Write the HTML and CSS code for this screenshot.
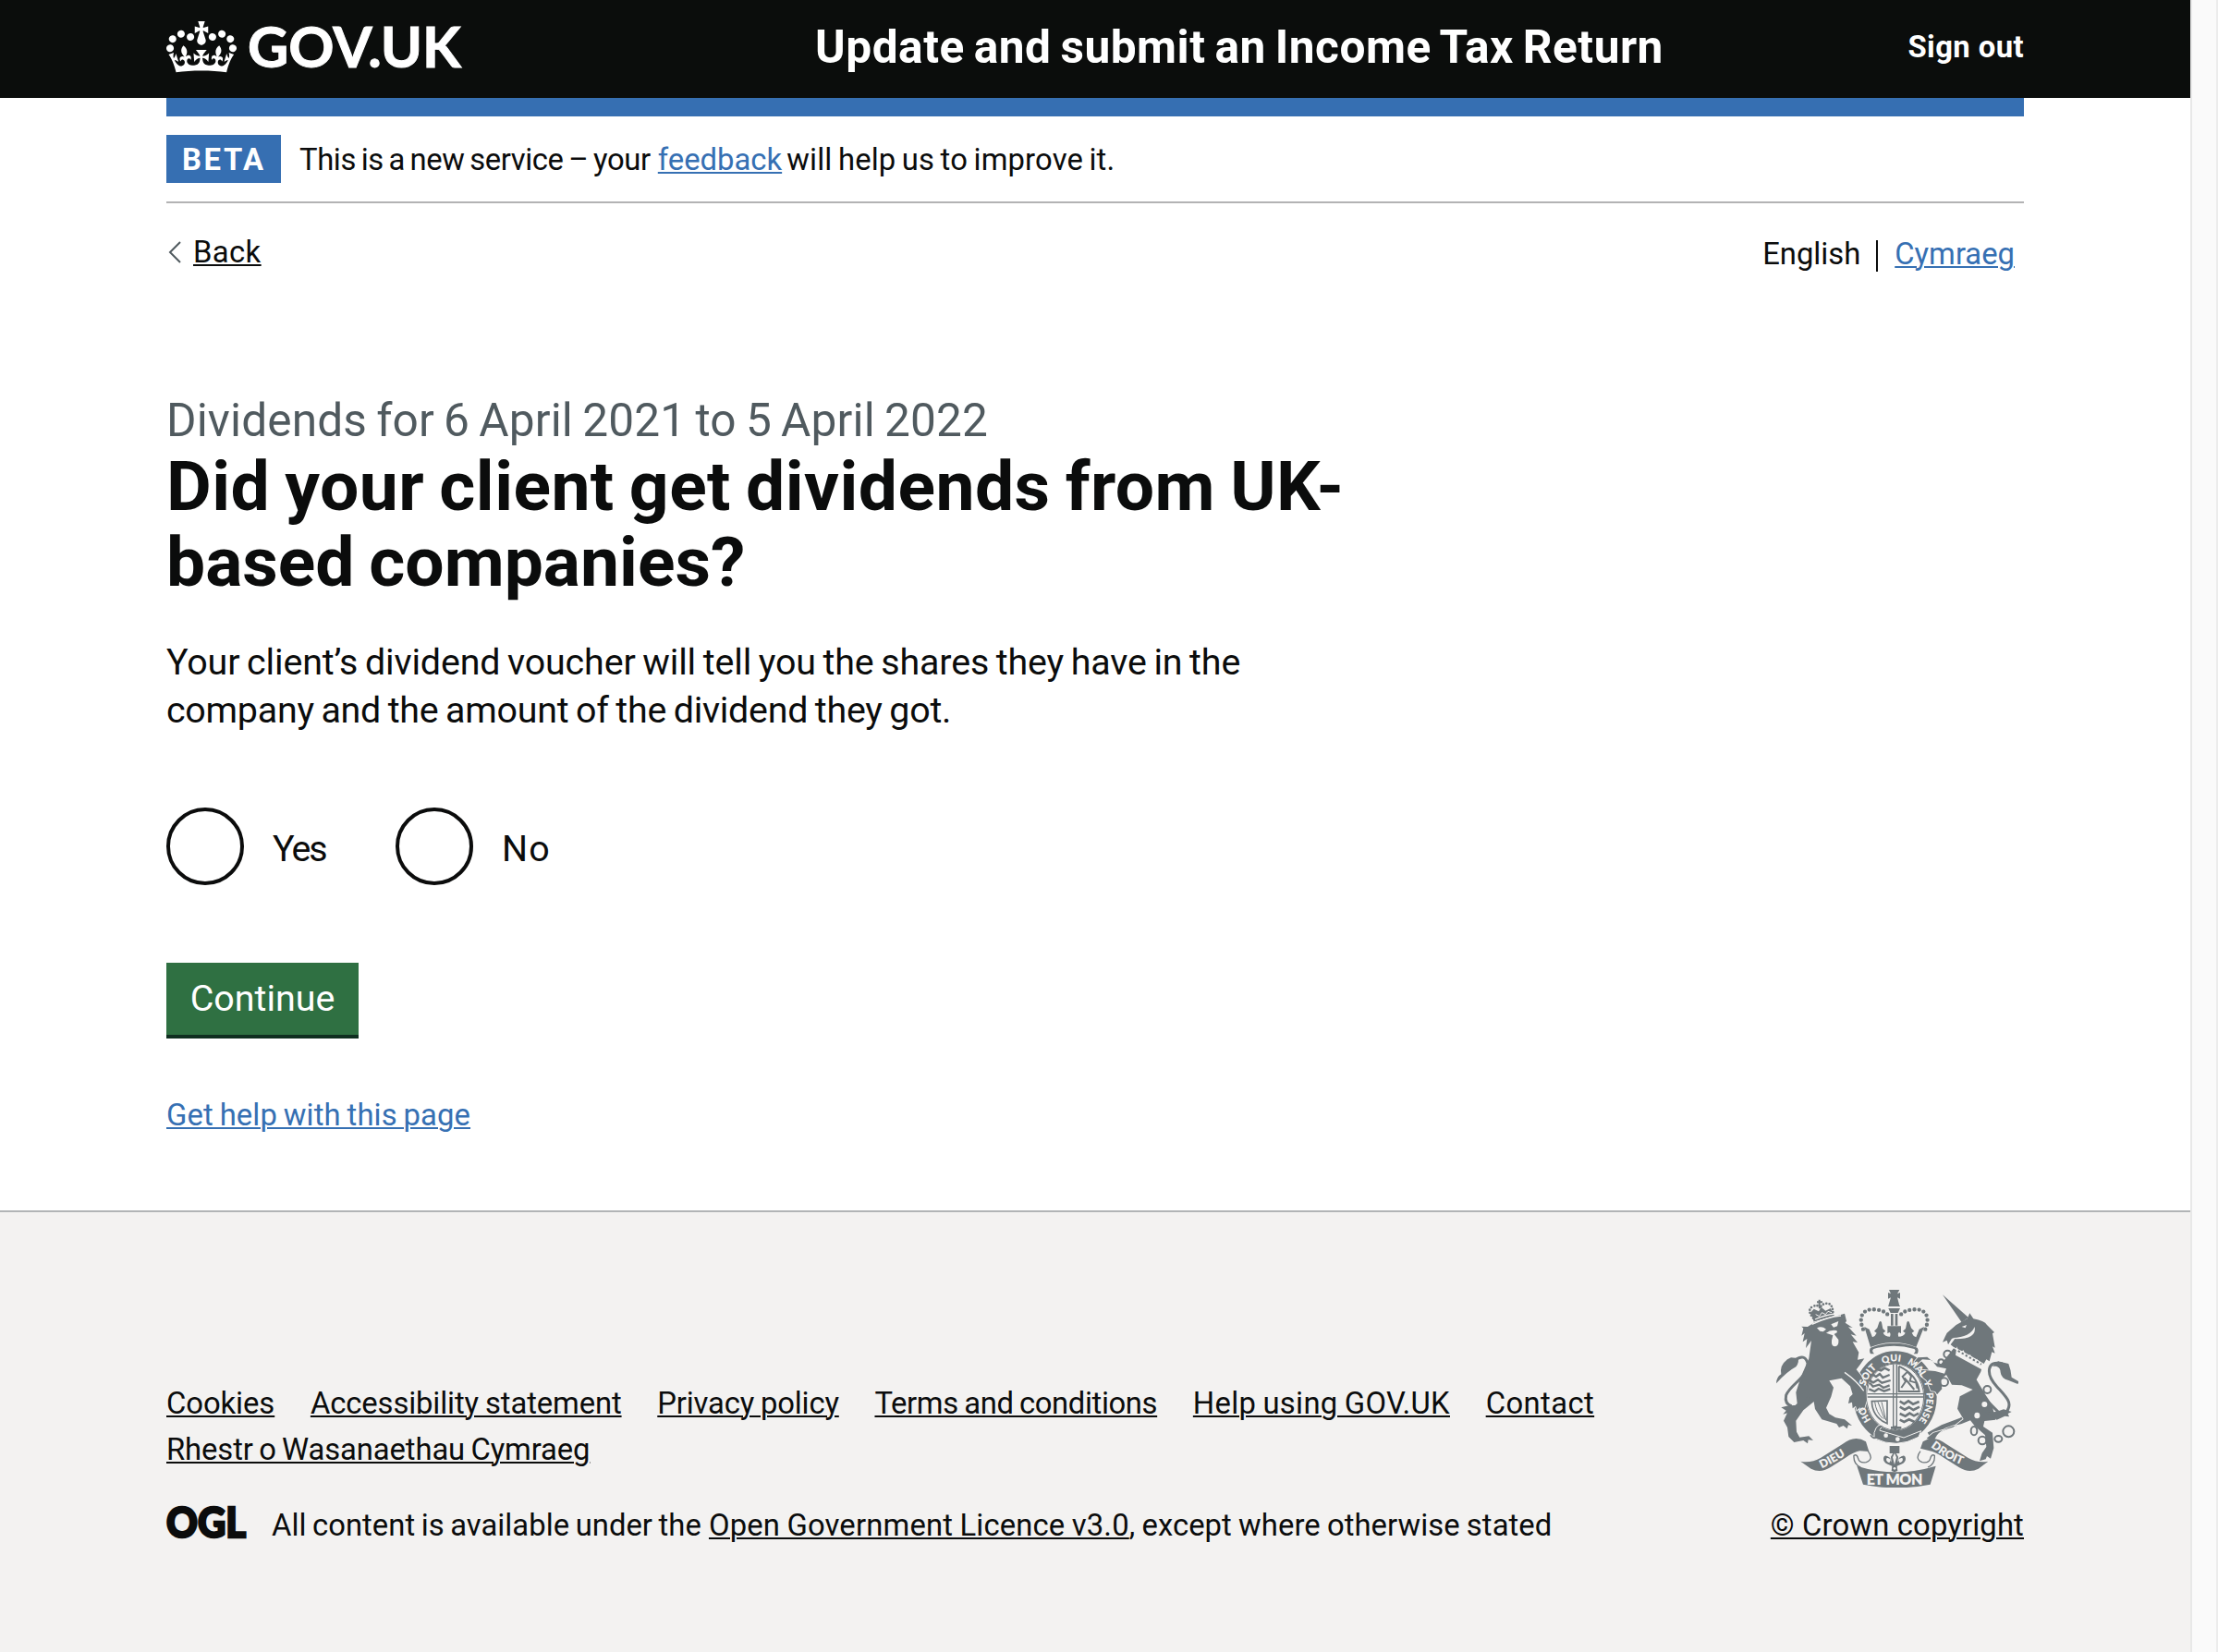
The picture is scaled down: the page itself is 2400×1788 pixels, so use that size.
FILE: index.html
```
<!DOCTYPE html>
<html lang="en">
<head>
<meta charset="utf-8">
<title>Did your client get dividends from UK-based companies?</title>
<link rel="stylesheet" href="styles.css">
</head>
<body>
<div class="page">
  <header class="header">
    <div class="container header-row">
      <a class="logo" href="#">
        <svg class="crown" viewBox="0 0 132 97" aria-hidden="true"><path fill="currentColor" fill-rule="evenodd" d="M25 30.2c3.5 1.5 7.7-.2 9.1-3.7 1.5-3.6-.2-7.8-3.9-9.2-3.6-1.4-7.6.3-9.1 3.9-1.4 3.5.3 7.5 3.9 9zM9 39.5c3.6 1.5 7.8-.2 9.2-3.7 1.5-3.6-.2-7.8-3.9-9.1-3.6-1.5-7.6.2-9.1 3.8-1.4 3.5.3 7.5 3.8 9zM4.4 57.2c3.5 1.5 7.7-.2 9.1-3.8 1.5-3.6-.2-7.7-3.9-9.1-3.5-1.5-7.6.3-9.1 3.8-1.4 3.5.3 7.6 3.9 9.1zm38.3-21.4c3.5 1.5 7.7-.2 9.1-3.8 1.5-3.6-.2-7.7-3.9-9.1-3.6-1.5-7.6.3-9.1 3.8-1.3 3.6.4 7.7 3.9 9.1zm64.4-5.6c-3.6 1.5-7.8-.2-9.1-3.7-1.5-3.6.2-7.8 3.8-9.2 3.6-1.4 7.7.3 9.2 3.9 1.3 3.5-.4 7.5-3.9 9zm15.9 9.3c-3.6 1.5-7.7-.2-9.1-3.7-1.5-3.6.2-7.8 3.7-9.1 3.6-1.5 7.7.2 9.2 3.8 1.5 3.5-.3 7.5-3.8 9zm4.7 17.7c-3.6 1.5-7.8-.2-9.2-3.8-1.5-3.6.2-7.7 3.9-9.1 3.6-1.5 7.7.3 9.2 3.8 1.3 3.5-.4 7.6-3.9 9.1zM89.3 35.8c-3.6 1.5-7.8-.2-9.2-3.8-1.4-3.6.2-7.7 3.9-9.1 3.6-1.5 7.7.3 9.2 3.8 1.4 3.6-.3 7.7-3.9 9.1zM69.7 17.7l8.9 4.7V9.3l-8.9 2.8c-.2-.3-.5-.6-.9-.9L72.4 0H59.6l3.5 11.2c-.3.3-.6.5-.9.9l-8.8-2.8v13.1l8.8-4.7c.3.3.6.7.9.9l-5 15.4v.1c-.2.8-.4 1.6-.4 2.4 0 4.1 3.1 7.5 7 8.1h.2c.3 0 .7.1 1 .1.4 0 .7 0 1-.1h.2c4-.6 7.1-4.1 7.1-8.1 0-.8-.1-1.7-.4-2.4V34l-5.1-15.4c.4-.2.7-.6 1-.9zM66 92.8c16.9 0 32.8 1.1 47.1 3.2 4-16.9 8.9-26.7 14-33.5l-9.6-3.4c1 4.9 1.1 7.2 0 10.2-1.5-1.4-3-4.3-4.2-8.7L108.6 76c2.8-2 5-3.2 7.5-3.3-4.4 9.4-10 11.9-13.6 11.2-4.3-.8-6.3-4.6-5.6-7.9 1-4.7 5.7-5.9 8-.5 4.3-8.7-3-11.4-7.6-8.8 7.1-7.2 7.9-13.5 2.1-21.1-8 6.1-8.1 12.3-4.5 20.8-4.7-5.4-12.1-2.5-9.5 6.2 3.4-5.2 7.9-2 7.2 3.1-.6 4.3-6.4 7.8-13.5 7.2-10.3-.9-10.9-8-11.2-13.8 2.5-.5 7.1 1.8 11 7.3L80.2 60c-4.1 4.4-8 5.3-12.3 5.4 1.4-4.4 8-11.6 8-11.6H55.5s6.4 7.2 7.9 11.6c-4.2-.1-8-1-12.3-5.4l1.4 16.4c3.9-5.5 8.5-7.7 10.9-7.3-.3 5.8-.9 12.8-11.1 13.8-7.2.6-12.9-2.9-13.5-7.2-.7-5 3.8-8.3 7.1-3.1 2.7-8.7-4.6-11.6-9.4-6.2 3.7-8.5 3.6-14.7-4.6-20.8-5.8 7.6-5 13.9 2.2 21.1-4.7-2.6-11.9.1-7.7 8.8 2.3-5.5 7.1-4.2 8.1.5.7 3.3-1.3 7.1-5.7 7.9-3.5.7-9-1.8-13.5-11.2 2.5.1 4.7 1.3 7.5 3.3l-4.7-15.4c-1.2 4.4-2.7 7.2-4.3 8.7-1.1-3-.9-5.3 0-10.2l-9.5 3.4c5 6.9 9.9 16.7 14 33.5 14.8-2.1 30.8-3.2 47.7-3.2z"/></svg>
        <span class="logo-text">GOV.UK</span>
      </a>
      <a class="service-name" href="#">Update and submit an Income Tax Return</a>
      <a class="sign-out" href="#">Sign out</a>
    </div>
  </header>

  <div class="container">
    <div class="blue-bar"></div>
    <div class="phase-banner">
      <strong class="tag">BETA</strong>
      <p class="phase-text"><span class="phase-lead">This is a new service – your</span> <a class="link feedback" href="#">feedback</a> <span class="phase-tail">will help us to improve it.</span></p>
    </div>
    <div class="nav-row">
      <a class="back" href="#"><svg class="chevron" viewBox="0 0 20 24" aria-hidden="true"><path d="M15 1 4 12l11 11" fill="none" stroke="#505a5f" stroke-width="2"/></svg><span class="back-text">Back</span></a>
      <div class="languages"><span class="language">English</span><a class="link language welsh" href="#">Cymraeg</a></div>
    </div>

    <main class="main">
      <span class="caption">Dividends for 6 April 2021 to 5 April 2022</span>
      <h1 class="heading">Did your client get dividends from UK-<br><span class="heading-last">based companies?</span></h1>
      <p class="body"><span class="body-first">Your client’s dividend voucher will tell you the shares they have in the</span><br>company and the amount of the dividend they got.</p>
      <form class="form">
        <div class="radios">
          <label class="radio"><input type="radio" name="answer" class="radio-input"><span class="yes">Yes</span></label>
          <label class="radio"><input type="radio" name="answer" class="radio-input"><span class="no">No</span></label>
        </div>
        <button type="button" class="button">Continue</button>
      </form>
      <a class="link help" href="#">Get help with this page</a>
    </main>
  </div>

  <footer class="footer">
    <div class="container footer-row">
      <div class="footer-main">
        <ul class="footer-links">
          <li><a class="l1" href="#">Cookies</a></li>
          <li><a class="l2" href="#">Accessibility statement</a></li>
          <li><a class="l3" href="#">Privacy policy</a></li>
          <li><a class="l4" href="#">Terms and conditions</a></li>
          <li><a class="l5" href="#">Help using GOV.UK</a></li>
          <li><a class="l6" href="#">Contact</a></li>
          <li><a class="l7" href="#">Rhestr o Wasanaethau Cymraeg</a></li>
        </ul>
        <div class="licence">
          <svg class="ogl" viewBox="0 0 86 36" aria-label="Open Government Licence"><text x="0" y="34" textLength="86" lengthAdjust="spacingAndGlyphs">OGL</text></svg>
          <span class="licence-text"><span class="c1">All content is available under the</span> <a class="c2" href="#">Open Government Licence v3.0</a><span class="c3">, except where otherwise stated</span></span>
        </div>
      </div>
      <div class="footer-side">
        <svg class="crest" viewBox="66 48 786 642" aria-hidden="true">
          <defs>
            <path id="garter" d="M393.5 491A102 116 0 1 1 517.6 485"/>
            <path id="ribbon-left" d="M214 628Q262 606 326 562"/>
            <path id="ribbon-right" d="M567 558Q630 608 700 626"/>
          </defs>
          <!-- imperial crown -->
          <g fill="#6f777b">
            <path d="M432 48h34l-7 13 9-4v20l-9-4 7 27h2v2h-38v-2l8-27-9 4V57l9 4z"/>
            <path d="M430 108h38l-7 15h-24zM438 126h8v38h-8zM452 126h8v38h-8z"/>
            <path d="M352 168l16 8 10 26q10-4 14-14l-8-6 10-10 6-18q4-8 8 0l4 20 9 8-8 6q6 12 22 12 4-12-2-14l-6 4v-24h44v24l-6-4q-6 2-2 14 16 0 22-12l-8-6 9-8 4-20q4-8 8 0l6 18 10 10-8 6q4 10 14 14l10-26 16-8-26 66q-72-30-148 0z"/>
            <path d="M372 236q76-30 152 0 6 8 0 20h-12q10-10 2-16-66-20-132 0-8 6 2 16h-12q-6-12 0-20z"/>
          </g>
          <path d="M348 176C330 132 350 108 388 112q36 4 44 24M550 176c18-44-2-68-40-64q-36 4-44 24" fill="none" stroke="#6f777b" stroke-width="13" stroke-linecap="round" stroke-dasharray="0 15.5"/>
          <!-- garter and quartered shield -->
          <ellipse cx="452" cy="396" rx="115" ry="129" fill="none" stroke="#6f777b" stroke-width="40"/>
          <ellipse cx="452" cy="396" rx="93" ry="108" fill="#f3f2f1" stroke="#6f777b" stroke-width="3"/>
          <g fill="none" stroke="#6f777b">
            <path d="M357 386h190M357 396h190M446 290v206M457 290v206" stroke-width="4"/>
            <path d="M377 322l13 8 12-9 10 12 22-9M365 340l16 9 15-9 13 10 28-8M370 350l10 12 20-6 14 10 20-8M367 370l18 8 13-9 18 8 20-7" stroke-width="7"/>
            <path d="M392 305l14 5 12-8 16 8M467 410l14 8 14-9 15 10 20-8M467 428l16 9 14-8 14 9 20-10M467 450l18 8 14-9 14 8 15-8M467 470l14 7 16-8 18 8" stroke-width="8"/>
            <path d="M376 410q2 52 50 72V408z" stroke-width="5"/>
            <path d="M386 412q4 34 26 54M396 412l22 56M408 412l14 60" stroke-width="3"/>
            <path d="M464 296v82h66q-6-54-66-82M472 366l14-20-10-16 16-16 12 14-4 16 20 6 4 18M482 334l22 26 10 12" stroke-width="6"/>
            <path d="M438 496h34M452 490v14" stroke-width="8"/>
          </g>
          <path d="M384 512q10-34 28-22l-12 14 80 24 56-22-8 20q-72 40-144 4z" fill="#6f777b" stroke="#f3f2f1" stroke-width="3"/>
          <circle cx="422" cy="521" r="7" fill="#f3f2f1"/><circle cx="460" cy="533" r="7" fill="#f3f2f1"/>
          <path d="M372 520q10 14 20 6t6-22q-2-14 12-12" fill="none" stroke="#6f777b" stroke-width="5"/>
          <!-- lion -->
          <g fill="#6f777b">
            <path d="M188 152q-2-14-12-28l12-14 16 8 8-14 14 12 16-8 12 22-2 12q-32-2-64 10z"/>
            <path stroke="#f3f2f1" stroke-width="5" paint-order="stroke" d="M168 168l22-14 98-29 6 24-4 6 24 16-14-2 26 28-18-4 22 26-16-2 20 34-4 24 22-4-14 20-12 16 16 20 16 36 2 44-8 26-16 10 2-14-10 10-4-14-10 8-2-20-12 4 4-20 10-10-8-26-28-26-40 8 14 22-8 30-16 36 10 20 20 12 30 6 24 20-12-2-4 12-12-10-14 6-8-12-48-14-22-34-4-24-34 28-24 34 2 36 10 18 30-4 14 14-16-2-2 12-14-10-30 6-18-18-4-30-12-22 12-26 32-30-4-36 16-50 26-60 8-58-18 24 4-30-14 10 6-28-10 8 6-24-6-6z"/>
            <path d="M66 352q0-20 16-30-6-28 20-48l12-6 22 2q6 12-6 28-30 16-64 54z"/>
            <path d="M82 430l24-6 40-2-10 12 10 6-26 12-4-8-28 8 10-12z"/>
          </g>
          <path d="M128 276q30-22 40 10c2 46-54 66-70 104q-6 28 18 36M150 428l20-30" fill="none" stroke="#6f777b" stroke-width="9"/>
          <path fill="#f3f2f1" d="M198 172q16-8 30 4l-10 8-10-2zM244 160l24-10-4 16-12 4zM228 188q14-12 34-8l2 6-10 6 14 18q2 20-10 22-14 0-12-20l4-16z"/>
          <path d="M192 144q30-14 64-18M182 160q50-24 94-28M288 316q40 28 62 60" fill="none" stroke="#f3f2f1" stroke-width="4"/>
          <path d="M186 140q-22-26-2-38 20-8 24 6 4-14 22-16 20 0 20 34" fill="none" stroke="#6f777b" stroke-width="8" stroke-dasharray="0 10" stroke-linecap="round"/>
          <path d="M206 80v22M198 88h18" stroke="#6f777b" stroke-width="6"/>
          <path d="M194 128l12 6 8-12 12 6 8-10 12 4" stroke="#f3f2f1" stroke-width="3" fill="none"/>
          <!-- unicorn -->
          <path d="M706 432l-36 40-64 24-44 24" fill="none" stroke="#6f777b" stroke-width="20" stroke-linejoin="round"/>
          <g fill="#6f777b">
            <path d="M606 64l84 74-22 16z"/>
            <path d="M620 188l30-26 36-20 8-18 12 18q36 6 44 20l24 24-6 4 8 46-8-4 8 22-10-4-8 30-10-6-8 14q-54-34-98-54l-10-8 16-22-12 2-12 20-4-14-14 6 8-18z"/>
            <path d="M642 238l92 62-4 14-14 26 30 50 20 30 12 50-36 4-4 18 30 20 4 50-10 34-12-8-4 10-20 6 8-26 14-20-4-38-34-30-14-18-30 12q-60 12-78 36l-12 20-22-10 22-18 64-18 34-26-20-34 8-40 42-22-36-14-32-2-18-32-18 14 4 32-16 18-6-10-14-2-14-34-20-16 4-18 44 4 30 8 6-16-30-6-18-22-30-2-20 18-6-10 12-14 30-2 22 18 22 6z" stroke="#f3f2f1" stroke-width="5" paint-order="stroke"/>
            <path d="M768 296l18-16 34 8q8 20 10 44l24 14-4 8-30-12q-24-6-26-26 0-16-14-20z"/>
            <path d="M746 446l34-2 24-8 26 8-12 6 4 10-14-2-26 12z"/>
          </g>
          <path d="M800 288c-50-14-56 32-18 74 32 36 54 54 30 84M746 404l48 48" fill="none" stroke="#6f777b" stroke-width="9"/>
          <g fill="#f3f2f1">
            <path d="M668 168l16-6-4 10zM710 168q8 40-62 40l-10-4q58-2 72-36z"/>
            <circle cx="742" cy="420" r="9"/><ellipse cx="718" cy="456" rx="9" ry="10"/>
            <path d="M652 232l8 20 14-8 8 22 14-8 8 22 14-8 6 22 26 0-14 14-88-48z"/>
          </g>
          <path d="M656 246l76 44" stroke="#6f777b" stroke-width="6" stroke-dasharray="7 7"/>
          <g fill="none" stroke="#6f777b" stroke-width="6">
            <circle cx="622" cy="257" r="12"/><circle cx="601" cy="283" r="9"/><circle cx="611" cy="347" r="13"/><circle cx="751" cy="372" r="12"/>
            <ellipse cx="708" cy="506" rx="10" ry="14"/><circle cx="735" cy="537" r="13"/><ellipse cx="787" cy="532" rx="12" ry="10"/><circle cx="820" cy="508" r="18"/>
          </g>
          <!-- ribbon -->
          <g fill="#6f777b">
            <path d="M145 605q34 6 66-12l70-44q40-32 76-8l10 32-30-2q-16 2-46 22l-50 32q-32 20-62 4z"/>
            <path d="M754 605q-34 6-66-12l-70-44q-40-32-76-8l-8 22 30 8q16 2 46 22l50 32q32 20 62 4z"/>
            <path d="M328 620q122 40 256 0l-18 60q-110 22-218 0z"/>
            <path d="M434 555h32v24h-32z"/>
            <path d="M450 570l12 20-2 18q6-6 4-14 20-16 22 2 0 12-14 18l-14 6 2 16-10 4-10-4 2-16-14-6q-14-6-14-18 2-18 22-2-2 8 4 14l-2-18z"/>
          </g>
          <g fill="#f3f2f1"><path d="M450 578l6 14-6 24-6-24zM425 594q10-2 12 8l-4 8q-14-6-8-16zM475 594q-10-2-12 8l4 8q14-6 8-16z"/><circle cx="450" cy="628" r="4"/></g>
          <path d="M364 572q20 26-6 36-22 4-26-12t-14-10q-2 28 22 38M534 572q-20 26 6 36 22 4 26-12t14-10q2 28-22 38" fill="none" stroke="#6f777b" stroke-width="4"/>
          <g class="motto">
            <text><textPath href="#garter" startOffset="28">HO</textPath></text>
            <text><textPath href="#garter" startOffset="143">SOIT</textPath></text>
            <text><textPath href="#garter" startOffset="238">QUI</textPath></text>
            <text><textPath href="#garter" startOffset="318">MAL</textPath></text>
            <text><textPath href="#garter" startOffset="398">Y</textPath></text>
            <text><textPath href="#garter" startOffset="436">PENSE</textPath></text>
            <text class="motto-side"><textPath href="#ribbon-left">DIEU</textPath></text>
            <text class="motto-side"><textPath href="#ribbon-right">DROIT</textPath></text>
            <text x="359" y="680" class="motto-main" textLength="182">ET MON</text>
          </g>
        </svg>
        <a class="copyright" href="#">© Crown copyright</a>
      </div>
    </div>
  </footer>
</div>
<div class="scrollbar"></div>
</body>
</html>
```
FILE: styles.css
```
* { box-sizing: border-box; }
body {
  margin: 0;
  display: flex;
  height: 1788px;
  overflow: hidden;
  background: #fff;
  color: #0b0c0c;
  font: 32.8px/50px Roboto, sans-serif;
}
p, h1, ul { margin: 0; padding: 0; }
a { color: inherit; text-decoration-thickness: 2px; text-underline-offset: 2px; }

.page { width: 2370px; display: flex; flex-direction: column; }
.scrollbar { width: 30px; background: #fafafa; border-left: 2px solid #e8e8e8; border-right: 2px solid #ececec; }
.container { width: 2010px; margin-left: 180px; }
.link { color: #3670b3; }

.header { height: 106px; padding-bottom: 4px; background: #0b0d0c; color: #fff; font-weight: 700; }
.header-row { display: flex; align-items: center; height: 102px; }
.header a { text-decoration: none; }
.header .logo { display: flex; align-items: center; width: 702px; }
.crown { width: 76px; height: 56px; display: block; }
.logo-text { margin-left: 12px; font: 700 61px/98px Lato, sans-serif; letter-spacing: 0; -webkit-text-stroke: 1px #fff; margin-top: -2px; }
.service-name { font-size: 49.6px; letter-spacing: .0105em; word-spacing: -.059em; }
.sign-out { margin-left: auto; letter-spacing: .013em; }

.blue-bar { height: 20px; background: #366fb2; }
.phase-banner { display: flex; align-items: center; gap: 20px; padding: 20px 0; border-bottom: 2px solid #b3b3b4; }
.tag { width: 124px; height: 52px; padding: 2px 0 0 17px; background: #366fb2; color: #fff; letter-spacing: .079em; }
.phase-text { height: 52px; padding-top: 2px; white-space: nowrap; }
.phase-lead { letter-spacing: -.012em; word-spacing: -.063em; }
.phase-tail { margin-left: -3px; letter-spacing: .0045em; word-spacing: -.055em; }

.nav-row { display: flex; justify-content: space-between; align-items: flex-start; padding-top: 28px; height: 208px; }
.back { display: flex; align-items: center; text-decoration: none; }
.chevron { width: 20px; height: 24px; margin-right: 9px; }
.back-text { text-decoration: underline; text-decoration-thickness: 2px; text-underline-offset: 2px; letter-spacing: .012em; }
.languages { display: flex; align-items: center; padding: 2px 10px 0 0; }
.welsh { position: relative; margin-left: 37px; }
.welsh::before { content: ""; position: absolute; left: -20px; top: 10px; width: 2px; height: 34px; background: #0b0c0c; }

.main { height: 882px; }
.caption { display: block; color: #505a5f; font-size: 49.6px; line-height: 54px; letter-spacing: .0025em; word-spacing: -.045em; }
.heading { margin-top: 3px; font-size: 75px; line-height: 82px; letter-spacing: .006em; word-spacing: -.039em; white-space: nowrap; }
.heading-last { letter-spacing: 0; }
.body { margin-top: 42px; font-size: 39.4px; line-height: 52px; letter-spacing: -.0065em; word-spacing: -.047em; white-space: nowrap; }
.body-first { letter-spacing: -.0035em; word-spacing: -.05em; }
.radios { display: flex; margin-top: 79px; }
.radio { display: flex; align-items: center; width: 248px; font-size: 39.4px; }
.radio span { padding-top: 5px; }
.radio-input { appearance: none; width: 84px; height: 84px; margin: 0 31px 0 0; border: 4px solid #0b0c0c; border-radius: 50%; }
.yes { letter-spacing: -.05em; }
.no { letter-spacing: .03em; }
.button { display: block; width: 208px; height: 78px; margin-top: 84px; padding: 0; border: 0; background: #2f7042; box-shadow: 0 4px 0 #0f2e20; color: #fff; font: 39.4px/78px Roboto, sans-serif; }
.help { display: block; width: max-content; margin-top: 62px; letter-spacing: .003em; word-spacing: -.04em; }

.footer { flex: 1; border-top: 2px solid #b1b4b6; background: #f3f2f1; }
.footer-row { display: flex; justify-content: space-between; align-items: flex-end; height: 364px; white-space: nowrap; }
.footer-links { display: flex; flex-wrap: wrap; column-gap: 38.7px; width: 1600px; list-style: none; }
.l1 { letter-spacing: -.002em; }
.l2 { letter-spacing: -.0035em; word-spacing: -.03em; }
.l3 { letter-spacing: -.0044em; word-spacing: -.04em; }
.l4 { letter-spacing: -.0114em; word-spacing: -.04em; }
.l5 { letter-spacing: .0098em; word-spacing: -.04em; }
.l6 { letter-spacing: .0123em; }
.l7 { letter-spacing: -.0035em; word-spacing: -.05em; }
.licence { display: flex; align-items: flex-start; gap: 28px; margin-top: 32px; }
.ogl { width: 86px; height: 36px; margin-top: 4px; overflow: visible; }
.ogl text { font: 900 45px Lato, sans-serif; fill: #0b0c0c; stroke: #0b0c0c; stroke-width: 2.5px; }
.c1 { letter-spacing: .001em; word-spacing: -.05em; }
.c2 { letter-spacing: .0049em; word-spacing: -.03em; }
.c3 { letter-spacing: .0018em; word-spacing: -.03em; }
.footer-side { display: flex; flex-direction: column; align-items: flex-end; }
.crest { width: 262px; height: 214px; margin: 0 6px 16px 0; }
.motto text { font: 800 31px Lato, sans-serif; fill: #f3f2f1; }
.motto .motto-side { font-size: 37px; }
.motto .motto-main { font-size: 48px; }
.copyright { letter-spacing: .0046em; }
```
